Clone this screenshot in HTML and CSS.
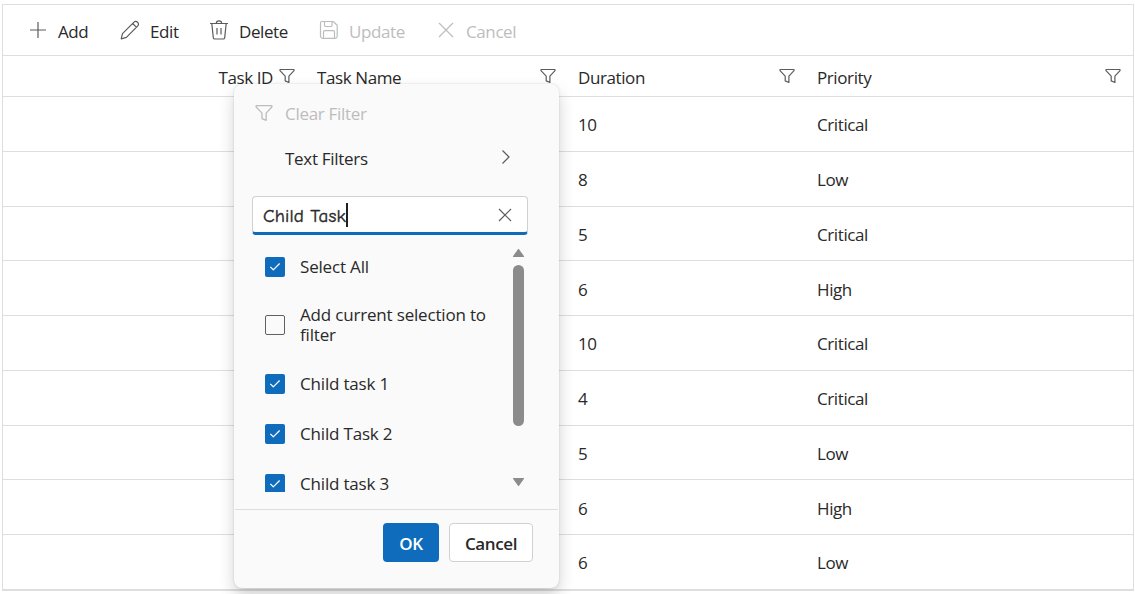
FILE: index.html
```
<!DOCTYPE html>
<html lang="en">
<head>
  <meta charset="UTF-8">
  <meta name="viewport" content="width=device-width, initial-scale=1.0">
  <title>Tree Grid</title>
  <link rel="stylesheet" href="styles.css">
</head>
<body>
  <svg class="symbols" width="0" height="0">
    <symbol id="filter" viewBox="0 0 16 16">
      <path d="M1 1.5h14v1.2L9.9 8.1v6.4L6.2 12.9V8.1L1 2.7z"/>
    </symbol>
    <symbol id="check" viewBox="0 0 20 20">
      <path d="M5.3 9.9l3 2.9 6.3-6.3"/>
    </symbol>
  </svg>

  <div class="grid">
    <div class="toolbar">
      <button class="tool add"><svg class="icon" viewBox="0 0 20 20"><path d="M10 2v16M2 10h16"/></svg>Add</button>
      <button class="tool edit"><svg class="icon" viewBox="0 0 20 20"><path d="M1.2 18.8l1.3-5.2L14 2.1a2.3 2.3 0 0 1 3.5.2 2.4 2.4 0 0 1 .3 3.6L6.4 17.4zM12.7 3.5l3.8 3.8"/></svg>Edit</button>
      <button class="tool delete"><svg class="icon" viewBox="0 0 20 20"><path d="M1 3.5h18M7.3 3.5a2.7 2.7 0 0 1 5.4 0M2.8 3.5l1.5 14.1q.2 1.4 1.5 1.4h8.4q1.3 0 1.5-1.4l1.5-14.1M8 8v6.5M12 8v6.5"/></svg>Delete</button>
      <button class="tool update" disabled><svg class="icon" viewBox="0 0 20 20"><path d="M3 1.5h11.2l4 3.8V16a2.3 2.3 0 0 1-2.3 2.3H3.8A2.3 2.3 0 0 1 1.500 16V3.200Q1.500 1.500 3 1.500zM5.500 1.500v3.700q0 1.300 1.300 1.300h4.900q1.300 0 1.300-1.300V1.500M4.500 18.300V12q0-1.300 1.300-1.300h8.400q1.300 0 1.300 1.300v6.300"/></svg>Update</button>
      <button class="tool cancel" disabled><svg class="icon" viewBox="0 0 20 20"><path d="M3 3l14 14M17 3L3 17"/></svg>Cancel</button>
    </div>

    <div class="row header">
      <div class="cell id">Task ID<svg class="filter-icon"><use href="#filter"/></svg></div>
      <div class="cell">Task Name<svg class="filter-icon"><use href="#filter"/></svg></div>
      <div class="cell">Duration<svg class="filter-icon"><use href="#filter"/></svg></div>
      <div class="cell last">Priority<svg class="filter-icon"><use href="#filter"/></svg></div>
    </div>
    <div class="row"><div class="cell duration">10</div><div class="cell">Critical</div></div>
    <div class="row"><div class="cell duration">8</div><div class="cell">Low</div></div>
    <div class="row"><div class="cell duration">5</div><div class="cell">Critical</div></div>
    <div class="row"><div class="cell duration">6</div><div class="cell">High</div></div>
    <div class="row"><div class="cell duration">10</div><div class="cell">Critical</div></div>
    <div class="row"><div class="cell duration">4</div><div class="cell">Critical</div></div>
    <div class="row"><div class="cell duration">5</div><div class="cell">Low</div></div>
    <div class="row"><div class="cell duration">6</div><div class="cell">High</div></div>
    <div class="row"><div class="cell duration">6</div><div class="cell">Low</div></div>
  </div>

  <div class="popup">
    <div class="menu-item disabled"><svg class="menu-icon"><use href="#filter"/></svg><span>Clear Filter</span></div>
    <div class="menu-item text-filters"><span>Text Filters</span><svg class="chevron" viewBox="0 0 10 16"><path d="M1.5 1.5L8 8l-6.5 6.5"/></svg></div>

    <div class="search">
      <span class="search-text">Child Task</span><span class="caret"></span>
      <svg class="clear" viewBox="0 0 14 14"><path d="M1 1l12 12M13 1L1 13"/></svg>
    </div>

    <div class="list-wrap">
      <div class="list">
        <div class="option"><span class="checkbox checked"><svg><use href="#check"/></svg></span>Select All</div>
        <div class="option tall"><span class="checkbox"></span>Add current selection to filter</div>
        <div class="option"><span class="checkbox checked"><svg><use href="#check"/></svg></span>Child task 1</div>
        <div class="option"><span class="checkbox checked"><svg><use href="#check"/></svg></span>Child Task 2</div>
        <div class="option"><span class="checkbox checked"><svg><use href="#check"/></svg></span>Child task 3</div>
      </div>
      <div class="scrollbar">
        <svg class="arrow" viewBox="0 0 13 10"><path d="M6.5 1.5L11.5 8.5h-10z"/></svg>
        <div class="thumb"></div>
        <svg class="arrow down" viewBox="0 0 13 10"><path d="M6.5 8.5L11.5 1.5h-10z"/></svg>
      </div>
    </div>

    <div class="footer">
      <button class="btn ok">OK</button>
      <button class="btn">Cancel</button>
    </div>
  </div>
</body>
</html>
```
FILE: styles.css
```
* {
  box-sizing: border-box;
}

body {
  margin: 0;
  height: 594px;
  overflow: hidden;
  background: #fff;
  color: #292929;
  font-family: "Open Sans", "Noto Sans", sans-serif;
  font-size: 17px;
  letter-spacing: -0.4px;
}

button {
  font: inherit;
  letter-spacing: inherit;
  color: inherit;
}

svg {
  fill: none;
  stroke: #5c5c5c;
  stroke-width: 1.2;
  stroke-linejoin: round;
  flex: none;
}

.symbols {
  position: absolute;
}

.grid {
  width: 1132px;
  margin: 4px 0 0 2px;
  border: 1px solid #dedede;
}

.toolbar {
  display: flex;
  align-items: center;
  height: 51px;
  padding-left: 25px;
  border-bottom: 1px solid #dedede;
}

.tool {
  display: flex;
  align-items: center;
  gap: 10px;
  padding: 2px 0 0;
  border: 0;
  background: none;
  white-space: nowrap;
}

.tool .icon {
  width: 20px;
  height: 20px;
  margin-top: -3px;
}

.add { width: 92px; }
.edit { width: 89px; }
.delete { width: 110px; }
.update { width: 117px; }

.tool:disabled {
  color: #bdbdbd;
}

.tool:disabled svg,
.disabled svg {
  stroke: #bdbdbd;
}

.row {
  display: grid;
  grid-template-columns: 303px 261px 239px 1fr;
  height: 54.75px;
  border-bottom: 1px solid #dedede;
}

.header {
  height: 41px;
}

.cell {
  display: flex;
  align-items: center;
  justify-content: space-between;
  padding: 2px 11px 0;
}

.last {
  padding-right: 12px;
}

.id {
  justify-content: flex-end;
  gap: 6px;
}

.duration {
  grid-column: 3;
}

.filter-icon {
  width: 16px;
  height: 16px;
  margin-top: -3px;
}

.popup {
  position: absolute;
  left: 234px;
  top: 84px;
  width: 325px;
  height: 504px;
  display: flex;
  flex-direction: column;
  background: #fafafa;
  border-radius: 8px;
  box-shadow: 0 0 2px rgba(0, 0, 0, 0.16), 0 8px 16px rgba(0, 0, 0, 0.18);
}

.menu-item {
  display: flex;
  align-items: center;
  height: 45px;
  padding: 13px 48px 0 20px;
  letter-spacing: -0.3px;
}

.disabled {
  color: #bdbdbd;
}

.menu-icon {
  width: 20px;
  height: 18px;
  margin-right: 11px;
}

.text-filters {
  justify-content: space-between;
  padding-left: 51px;
}

.chevron {
  width: 10px;
  height: 16px;
  margin-top: -2px;
}

.search {
  display: flex;
  align-items: center;
  width: 276px;
  height: 39px;
  margin: 22px 0 0 18px;
  padding: 0 15px 0 10px;
  background: #fff;
  border: 1px solid #d1d1d1;
  border-bottom: 3px solid #0f6cbd;
  border-radius: 4px;
}

.search-text {
  font-family: "Comic Neue", "Comic Sans MS", "Open Sans", sans-serif;
  font-size: 19px;
  padding-top: 3px;
  letter-spacing: 0.1px;
  -webkit-text-stroke: 0.4px #292929;
}

.caret {
  width: 2px;
  height: 24px;
  background: #1f1f1f;
}

.clear {
  width: 14px;
  height: 14px;
  margin-left: auto;
}

.list-wrap {
  display: flex;
  height: 250px;
  margin: 7px 34px 0 31px;
  letter-spacing: -0.18px;
}

.list {
  width: 247px;
  overflow: hidden;
}

.option {
  display: flex;
  align-items: center;
  gap: 15px;
  height: 50px;
  padding-right: 18px;
  line-height: 20px;
}

.tall {
  height: 66px;
  margin-bottom: 1px;
}

.checkbox {
  width: 20px;
  height: 20px;
  flex: none;
  border: 1px solid #616161;
  border-radius: 2px;
}

.checked {
  border: 0;
  background: #0f6cbd;
}

.checked svg {
  display: block;
  width: 20px;
  height: 20px;
  stroke: #fff;
}

.scrollbar {
  display: flex;
  flex-direction: column;
  width: 13px;
  padding: 6px 0 5px;
  align-items: center;
}

.thumb {
  width: 11px;
  height: 161px;
  margin-top: 7px;
  background: #8b8b8b;
  border-radius: 6px;
}

.arrow {
  width: 13px;
  height: 10px;
}

.arrow path {
  fill: #8b8b8b;
  stroke: #8b8b8b;
}

.down {
  margin-top: auto;
}

.footer {
  display: flex;
  justify-content: flex-end;
  gap: 10px;
  margin: 17px 1px 0;
  padding: 13px 25px 0 0;
  border-top: 1px solid #dedede;
}

.btn {
  width: 84px;
  height: 39px;
  padding: 2px 0 0;
  border: 1px solid #d1d1d1;
  border-radius: 4px;
  background: #fff;
  font-weight: 600;
}

.ok {
  width: 56px;
  border: 0;
  background: #0f6cbd;
  color: #fff;
}
```
